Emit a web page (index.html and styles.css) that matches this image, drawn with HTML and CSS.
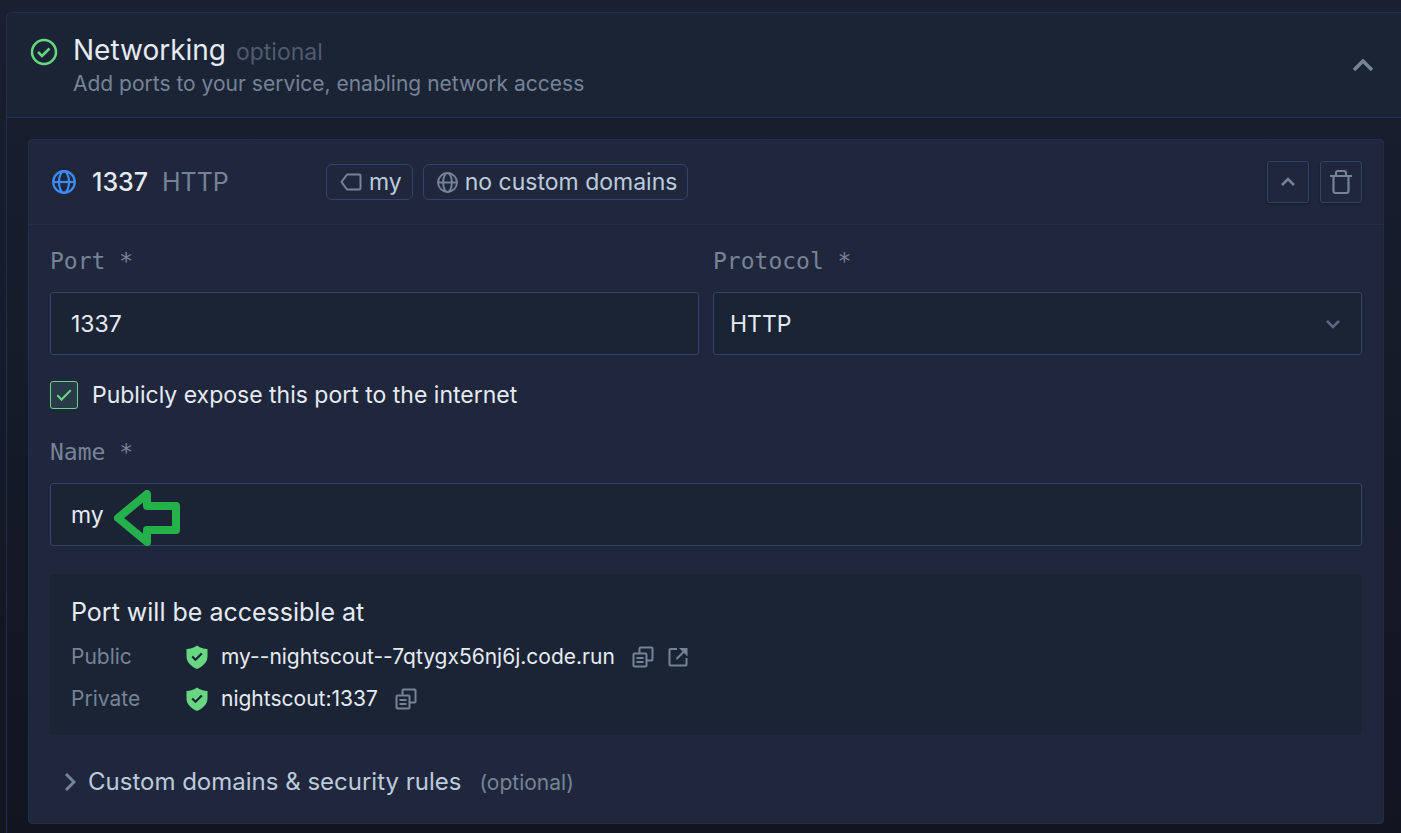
FILE: index.html
```html
<!DOCTYPE html>
<html lang="en">
<head>
<meta charset="utf-8">
<meta name="viewport" content="width=device-width, initial-scale=1">
<title>Networking</title>
<link rel="stylesheet" href="styles.css">
</head>
<body>
<svg class="sprite" aria-hidden="true">
  <symbol id="globe" viewBox="0 0 24 24"><g fill="none" stroke="currentColor" stroke-width="2.200"><circle cx="12" cy="12" r="10.800"/><ellipse cx="12" cy="12" rx="5" ry="10.800"/><path d="M1 12h22"/></g></symbol>
  <symbol id="shield" viewBox="0 0 22 24"><path fill="currentColor" d="M11 0.500c3 2.200 6.500 3.300 10.500 3.500v7.500c0 5.500-4.500 9.800-10.500 12.500C5 21.300 0.500 17 0.500 11.500V4C4.500 3.800 8 2.700 11 0.500z"/><path d="M6.200 11.500l3.300 3.200 6.300-6.200" fill="none" stroke="#1c2436" stroke-width="2.200"/></symbol>
  <symbol id="copy" viewBox="0 0 22 22"><g fill="none" stroke="currentColor" stroke-width="2" stroke-linejoin="round"><rect x="1.500" y="7.500" width="13" height="13" rx="1"/><path d="M7.500 7.500V2.500q0-1 1-1h11q1 0 1 1v11q0 1-1 1h-5M4.500 12h7M4.500 16h7"/></g></symbol>
  <symbol id="external" viewBox="0 0 20 20"><path d="M9 2H2.500Q1.500 2 1.500 3V17.500Q1.500 18.500 2.500 18.500H17.500Q18.500 18.500 18.500 17.500V11M8.500 12L16 4.500" fill="none" stroke="currentColor" stroke-width="2"/><path d="M11 1h8.500v8.500z" fill="currentColor"/></symbol>
</svg>
<section class="panel">
  <header class="panel-header">
    <svg class="status" viewBox="0 0 28 28" aria-hidden="true"><g fill="none" stroke="currentColor" stroke-width="2.500"><circle cx="14" cy="14" r="12"/><path d="M8 14l4 4 7.500-7.500"/></g></svg>
    <div class="panel-heading">
      <h2 class="panel-title">Networking <span class="optional">optional</span></h2>
      <p class="panel-subtitle">Add ports to your service, enabling network access</p>
    </div>
    <button class="toggle" type="button" aria-label="Collapse networking"><svg width="22" height="14" viewBox="0 0 22 14"><path d="M2 11l9-9 9 9" fill="none" stroke="currentColor" stroke-width="3.500"/></svg></button>
  </header>
  <div class="panel-body">
    <article class="port">
      <header class="port-header">
        <div class="port-id">
          <svg class="port-globe" aria-hidden="true"><use href="#globe"/></svg>
          <span class="port-number">1337</span>
          <span class="port-protocol">HTTP</span>
        </div>
        <div class="tags">
          <span class="tag"><svg width="22" height="18" viewBox="0 0 22 18" aria-hidden="true"><path d="M7 1.500h12.500q1 0 1 1v13q0 1-1 1H7L1.500 9z" fill="none" stroke="currentColor" stroke-width="2" stroke-linejoin="round"/></svg>my</span>
          <span class="tag"><svg width="21" height="21" aria-hidden="true"><use href="#globe"/></svg>no custom domains</span>
        </div>
        <div class="actions">
          <button class="action" type="button" aria-label="Collapse port"><svg width="14" height="10" viewBox="0 0 14 10"><path d="M1 8l6-6 6 6" fill="none" stroke="currentColor" stroke-width="2.500"/></svg></button>
          <button class="action" type="button" aria-label="Delete port"><svg width="22" height="24" viewBox="0 0 22 24"><g fill="none" stroke="currentColor" stroke-width="2.200"><path d="M0 6h22M6 6V3q0-2 2-2h6q2 0 2 2v3"/><path d="M3.500 6v15q0 2 2 2h11q2 0 2-2V6"/></g></svg></button>
        </div>
      </header>
      <form class="port-form">
        <div class="columns">
          <div class="field">
            <label class="label" for="port">Port *</label>
            <input class="control" id="port" type="text" value="1337">
          </div>
          <div class="field">
            <label class="label" for="protocol">Protocol *</label>
            <div class="control-wrap">
              <select class="control select" id="protocol"><option>HTTP</option></select>
              <svg class="caret" width="14" height="10" viewBox="0 0 14 10" aria-hidden="true"><path d="M1 2l6 6 6-6" fill="none" stroke="currentColor" stroke-width="2.500"/></svg>
            </div>
          </div>
        </div>
        <label class="check"><input class="check-box" type="checkbox" checked><span>Publicly expose this port to the internet</span></label>
        <div class="field">
          <label class="label" for="name">Name *</label>
          <div class="control-wrap">
            <input class="control" id="name" type="text" value="my">
            <svg class="pointer" width="66" height="56" viewBox="0 0 66 56" aria-hidden="true"><path d="M4 28L33 4v12h29v24H33v12z" fill="none" stroke="currentColor" stroke-width="8" stroke-linejoin="round"/></svg>
          </div>
        </div>
        <div class="access">
          <h3 class="access-title">Port will be accessible at</h3>
          <dl class="access-list">
            <div class="access-row">
              <dt class="access-kind">Public</dt>
              <dd class="access-value"><svg class="shield" aria-hidden="true"><use href="#shield"/></svg><span class="host">my--nightscout--7qtygx56nj6j.code.run</span><span class="icons"><button class="icon-button" type="button" aria-label="Copy public address"><svg width="22" height="22"><use href="#copy"/></svg></button><a class="icon-button" href="#" aria-label="Open public address"><svg width="20" height="20"><use href="#external"/></svg></a></span></dd>
            </div>
            <div class="access-row">
              <dt class="access-kind">Private</dt>
              <dd class="access-value"><svg class="shield" aria-hidden="true"><use href="#shield"/></svg><span class="host">nightscout:1337</span><span class="icons"><button class="icon-button" type="button" aria-label="Copy private address"><svg width="22" height="22"><use href="#copy"/></svg></button></span></dd>
            </div>
          </dl>
        </div>
        <details class="rules">
          <summary class="rules-summary"><svg width="12" height="18" viewBox="0 0 12 18" aria-hidden="true"><path d="M2 1l8 8-8 8" fill="none" stroke="currentColor" stroke-width="3"/></svg><span class="rules-text"><span class="rules-title">Custom domains &amp; security rules</span><span class="rules-note">(optional)</span></span></summary>
        </details>
      </form>
    </article>
  </div>
</section>
</body>
</html>
```
FILE: styles.css
```css
:root {
  --text: #e6ebf2;
  --soft: #bccbdc;
  --muted: #768397;
  --faint: #505b70;
  --line: #212e52;
  --line-strong: #33426f;
  --surface: #1b2435;
  --raised: #20273c;
  --green: #68d782;
}

* { box-sizing: border-box; }

body {
  margin: 0;
  min-height: 100vh;
  padding: 12px 0 0 6px;
  background: linear-gradient(#1a1f31, #111520);
  color: var(--text);
  font: 23px/36px Inter, sans-serif;
}

.sprite { position: absolute; width: 0; height: 0; }
svg { display: block; flex: none; }
h2, h3, p, dl, dd { margin: 0; font-weight: 400; }
button { border: 0; padding: 0; background: none; color: var(--muted); font: inherit; }

.panel {
  border: 1px solid var(--line);
  border-width: 1px 0 0 1px;
  border-top-left-radius: 6px;
}

.panel-header {
  display: flex;
  align-items: center;
  padding: 19px 27px 18px 23px;
  background: var(--surface);
  border-bottom: 1px solid var(--line);
  border-top-left-radius: 6px;
}
.status { align-self: flex-start; width: 28px; height: 28px; margin: 6px 15px 0 0; color: var(--green); }
.panel-heading { flex: 1; }
.panel-title { font-size: 28px; line-height: 37px; }
.optional { margin-left: 2px; color: var(--faint); font-size: 23px; line-height: 1; }
.panel-subtitle { color: var(--muted); font-size: 21px; line-height: 30px; }

.panel-body { padding: 21px 17px 9px 21px; }

.port { background: var(--raised); border: 1px solid var(--line); border-radius: 4px; }
.port-header {
  display: flex;
  align-items: center;
  padding: 21px;
  border-bottom: 1px solid var(--line);
}
.port-id { display: flex; align-items: center; width: 276px; padding-left: 2px; font-size: 25px; }
.port-globe { width: 24px; height: 24px; margin-right: 16px; color: #3d8bfa; }
.port-number { margin-right: 14px; font-weight: 500; }
.port-protocol { color: var(--muted); }
.tags { display: flex; flex: 1; gap: 10px; }
.tag {
  display: flex;
  align-items: center;
  gap: 7px;
  height: 36px;
  padding: 0 10px 0 13px;
  border: 1px solid var(--line-strong);
  border-radius: 6px;
  color: var(--soft);
}
.tag svg { color: var(--muted); }
.actions { display: flex; gap: 11px; }
.action {
  display: grid;
  place-items: center;
  width: 42px;
  height: 42px;
  border: 1px solid var(--line-strong);
  border-radius: 3px;
  box-shadow: 0 1px 3px #151a2a;
}

.port-form { padding: 22px 21px 20px; }
.columns { display: grid; grid-template-columns: 1fr 1fr; gap: 14px; }
.label {
  display: block;
  margin-bottom: 17px;
  color: var(--muted);
  font: 23px/28px "DejaVu Sans Mono", monospace;
}
.control {
  display: block;
  width: 100%;
  height: 63px;
  padding: 0 20px;
  border: 1px solid var(--line-strong);
  border-radius: 3px;
  background: var(--surface);
  color: var(--text);
  font: 23px/36px Inter, sans-serif;
}
.control-wrap { position: relative; }
.select { appearance: none; padding: 0 16px; }
.caret { position: absolute; top: 27px; right: 22px; color: #5c6880; pointer-events: none; }
.pointer { position: absolute; top: 7px; left: 64px; color: #24b14c; pointer-events: none; }

.check { display: flex; align-items: center; gap: 14px; margin: 26px 0 29px; line-height: 28px; }
.check-box {
  appearance: none;
  display: grid;
  place-items: center;
  width: 28px;
  height: 28px;
  margin: 0;
  border: 1px solid var(--green);
  border-radius: 3px;
  background: #293b49;
}
.check-box:checked::before {
  content: "";
  box-sizing: border-box;
  width: 14px;
  height: 7px;
  margin-bottom: 3px;
  border: solid var(--green);
  border-width: 0 0 2px 2px;
  transform: rotate(-45deg);
}

.access { margin-top: 28px; padding: 20px 21px 15px; border-radius: 4px; background: var(--surface); }
.access-title { margin-bottom: 6px; font-size: 25px; line-height: 36px; }
.access-row { display: flex; font-size: 21px; line-height: 42px; }
.access-kind { width: 115px; color: var(--muted); }
.access-value { display: flex; align-items: center; }
.shield { width: 22px; height: 24px; margin-right: 13px; color: var(--green); }
.icons { display: flex; align-items: center; gap: 14px; margin-left: 17px; }
.icon-button { color: var(--muted); }

.rules { margin-top: 26px; }
.rules-summary { display: flex; align-items: center; padding-left: 14px; line-height: 42px; list-style: none; color: var(--muted); }
.rules-text { display: flex; align-items: baseline; gap: 18px; height: 42px; margin-left: 12px; }
.rules-title { color: var(--soft); font-size: 24px; }
.rules-note { font-size: 21px; }
```
